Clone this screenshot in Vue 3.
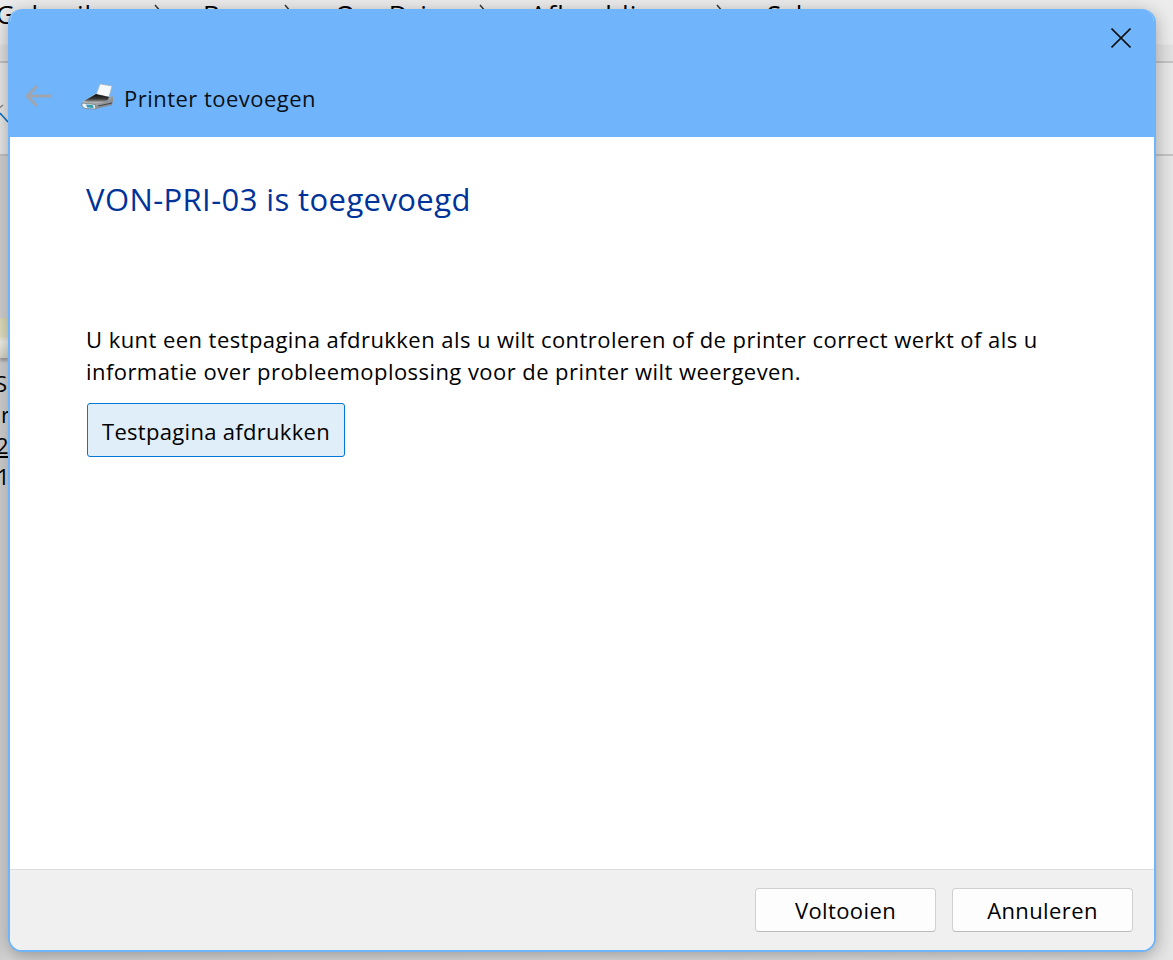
<script setup>
const crumbs = [
  { text: 'Gebruikers', w: 207, pad: 40 },
  { text: 'Bram', w: 132, pad: 42 },
  { text: 'OneDrive', w: 195, pad: 42 },
  { text: 'Afbeeldingen', w: 237, pad: 42 },
  { text: 'Sch', w: 100, pad: 0 }
]
const sideLetters = [
  { text: 'S', shift: -5, under: false },
  { text: 'r', shift: 1, under: false },
  { text: '2', shift: -4, under: true },
  { text: '1', shift: -3, under: false }
]
</script>

<template>
  <div class="desktop">
    <div class="explorer">
      <div class="crumbs">
        <span
          v-for="(c, i) in crumbs"
          :key="c.text"
          class="crumb"
          :style="{ width: c.w + 'px', paddingRight: c.pad + 'px' }"
        >
          <span class="crumb-text">{{ c.text }}</span>
          <svg v-if="i < crumbs.length - 1" class="chev" width="10" height="18" viewBox="0 0 10 18">
            <path d="M2 2l6 7-6 7" fill="none" stroke="#333" stroke-width="1.4" />
          </svg>
        </span>
      </div>
      <div class="toolbar">
        <svg class="tool-check" width="10" height="30" viewBox="0 0 10 30">
          <path d="M-2 7L3 3" fill="none" stroke="#777" stroke-width="1.2" />
          <path d="M0 11L8 20" fill="none" stroke="#1473c4" stroke-width="1.6" />
        </svg>
      </div>
      <div class="thumb">
        <div class="thumb-img"></div>
      </div>
      <div class="side-text">
        <div
          v-for="l in sideLetters"
          :key="l.text"
          :class="{ under: l.under }"
          :style="{ marginLeft: l.shift + 'px' }"
        >{{ l.text }}</div>
      </div>
    </div>

    <div class="dialog">
      <header class="head">
        <div class="close-row">
          <svg class="close" width="20" height="20" viewBox="0 0 20 20">
            <path d="M0.5 0.5L19.5 19.5M19.5 0.5L0.5 19.5" fill="none" stroke="#111" stroke-width="1.6" />
          </svg>
        </div>
        <div class="title-row">
          <svg class="back" width="26" height="24" viewBox="0 0 26 24">
            <path d="M12 2L2 12l10 10M2 12h24" fill="none" stroke="#9fa6ad" stroke-width="3" />
          </svg>
          <svg class="printer" width="34" height="27" viewBox="0 0 34 27">
            <defs>
              <linearGradient id="pBody" x1="0" y1="0" x2="0" y2="1">
                <stop offset="0" stop-color="#0c0c0c" />
                <stop offset="0.55" stop-color="#3a3a3a" />
                <stop offset="1" stop-color="#c4c4c4" />
              </linearGradient>
              <linearGradient id="pSide" x1="0" y1="0" x2="1" y2="1">
                <stop offset="0" stop-color="#d4d6d8" />
                <stop offset="1" stop-color="#70767a" />
              </linearGradient>
            </defs>
            <path d="M19 1l12 2-3 11-13-2z" fill="#f6f8fa" stroke="#a9b2ba" stroke-width="0.7" />
            <path d="M1 19L14 11l15 3 3-1v5l-1 4-16 4z" fill="url(#pSide)" />
            <path d="M3 18L15 11l13 3-1.500 3.500L20 20l-9 0z" fill="url(#pBody)" />
            <path d="M1 20l13 1.500 1 4.500-11-0.500-3-2.500z" fill="#eef0f2" stroke="#5e6468" stroke-width="0.6" />
            <path d="M5 21.500l7 0.800 0.700 2.600-6.500-0.300z" fill="#2c9bc9" />
            <path d="M8 22.500l2.500 0.300 0.300 1.400-2.300-0.100z" fill="#3aa65a" />
            <path d="M17 23l14-3" stroke="#41474b" stroke-width="1" fill="none" />
          </svg>
          <span class="title">Printer toevoegen</span>
        </div>
      </header>

      <main class="body">
        <h1 class="heading">VON-PRI-03 is toegevoegd</h1>
        <p class="info">U kunt een testpagina afdrukken als u wilt controleren of de printer correct werkt of als u<br />informatie over probleemoplossing voor de printer wilt weergeven.</p>
        <button class="btn-test" type="button">Testpagina afdrukken</button>
      </main>

      <footer class="foot">
        <button class="btn" type="button">Voltooien</button>
        <button class="btn" type="button">Annuleren</button>
      </footer>
    </div>
  </div>
</template>

<style scoped>
.desktop {
  position: relative;
  width: 1173px;
  height: 960px;
  overflow: hidden;
  background: #bdbdbd;
  font-family: "Open Sans", "Noto Sans", sans-serif;
  color: #000;
}
.explorer {
  height: 100%;
  background: linear-gradient(90deg, #d0d0d0 0, #d8d8d8 8px, #e6e6e6 1156px, #e6e6e6 100%);
  display: flex;
  flex-direction: column;
}
.crumbs {
  height: 63px;
  box-sizing: border-box;
  display: flex;
  background: linear-gradient(180deg, #ececec 0, #ececec 44px, #e2e2e2 45px, #e2e2e2 100%);
  border-bottom: 2px solid #c4c4c4;
  font-size: 26px;
  line-height: 28px;
  white-space: nowrap;
  overflow: hidden;
}
.crumb {
  display: inline-flex;
  flex: none;
  justify-content: space-between;
  box-sizing: border-box;
}
.crumb:first-child { margin-left: -4px; }
.crumb-text { display: block; letter-spacing: 1px; }
.chev { margin-top: 3px; }
.toolbar {
  height: 93px;
  box-sizing: border-box;
  border-bottom: 2px solid #c4c4c4;
  padding-top: 39px;
  background: #e8e8e8;
}
.tool-check { display: block; }
.thumb {
  margin-top: 162px;
  width: 8px;
  height: 40px;
  overflow: hidden;
  box-shadow: 0 3px 3px rgba(0,0,0,.25);
}
.thumb-img {
  height: 100%;
  background: linear-gradient(180deg, #dedcb8 0, #e3e1c5 45%, #f2f2ea 60%, #d7d6c8 100%);
}
.side-text {
  margin-top: 10px;
  width: 8px;
  overflow: hidden;
  font-size: 22px;
  line-height: 31px;
}
.under { text-decoration: underline; }

.dialog {
  position: absolute;
  left: 8px;
  top: 9px;
  width: 1148px;
  height: 943px;
  box-sizing: border-box;
  border: 2px solid #70b5fb;
  border-top: 0;
  border-radius: 14px;
  background: #fff;
  box-shadow: 0 4px 18px rgba(0, 0, 0, .32);
  display: flex;
  flex-direction: column;
  overflow: hidden;
}
.head {
  height: 128px;
  background: #70b5fb;
  flex: none;
  margin: 0 -2px;
}
.close-row {
  display: flex;
  justify-content: flex-end;
  padding: 19px 25px 0 0;
  height: 39px;
  box-sizing: border-box;
}
.close { display: block; }
.title-row {
  display: flex;
  align-items: center;
  height: 27px;
  margin-top: 36px;
  padding-left: 17px;
}
.back { flex: none; margin-top: -3px; }
.printer { flex: none; margin-left: 30px; margin-top: -2px; }
.title {
  margin-left: 9px;
  font-size: 22px;
  color: #0a0f16;
  letter-spacing: .47px;
}
.body {
  flex: 1;
  padding: 41px 0 0 76px;
  min-height: 0;
}
.heading {
  margin: 0;
  font-size: 31px;
  line-height: 42px;
  font-weight: 400;
  color: #003399;
  letter-spacing: .4px;
}
.info {
  margin: 103px 0 0;
  font-size: 22px;
  line-height: 32px;
  white-space: nowrap;
  letter-spacing: .44px;
}
.btn-test {
  display: block;
  margin-top: 16px;
  margin-left: 1px;
  width: 258px;
  height: 54px;
  padding: 2px 0 0;
  border: 1px solid #0078d4;
  border-radius: 3px;
  background: #e0eef9;
  font: inherit;
  font-size: 22px;
  letter-spacing: .3px;
  color: #000;
}
.foot {
  flex: none;
  height: 81px;
  box-sizing: border-box;
  background: #f0f0f0;
  border-top: 1px solid #dcdcdc;
  padding: 18px 21px 0 0;
  display: flex;
  justify-content: flex-end;
  align-items: flex-start;
  gap: 16px;
}
.btn {
  width: 181px;
  height: 44px;
  padding: 0;
  border: 1px solid #d0d0d0;
  border-bottom-color: #bcbcbc;
  border-radius: 4px;
  background: #fdfdfd;
  font: inherit;
  font-size: 22px;
  letter-spacing: .4px;
  color: #000;
}
</style>
